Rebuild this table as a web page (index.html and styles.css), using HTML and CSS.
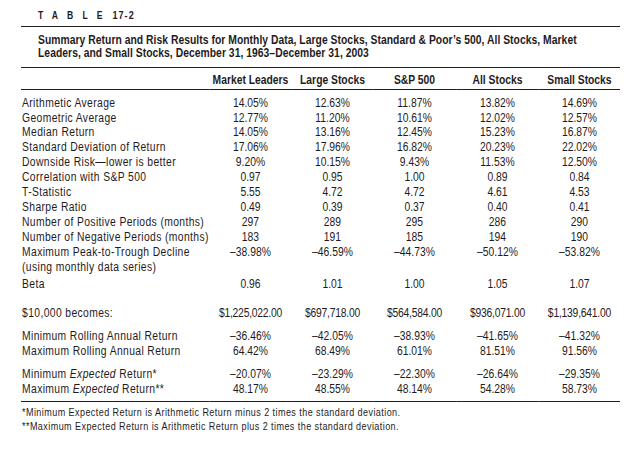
FILE: index.html
```html
<!DOCTYPE html>
<html>
<head>
<meta charset="utf-8">
<link rel="stylesheet" href="styles.css">
</head>
<body>
<div class="frame">
<div class="page">
  <div class="title"><span class="title-word">TABLE</span><span class="title-num">17-2</span></div>
  <div class="caption">Summary Return and Risk Results for Monthly Data, Large Stocks, Standard &amp; Poor’s 500, All Stocks, Market<br>Leaders, and Small Stocks, December 31, 1963–December 31, 2003</div>
  <table class="data">
    <colgroup>
      <col class="c0"><col class="c1"><col class="c2"><col class="c3"><col class="c4"><col class="c5">
    </colgroup>
    <thead>
      <tr><th></th><th>Market Leaders</th><th>Large Stocks</th><th>S&amp;P 500</th><th>All Stocks</th><th>Small Stocks</th></tr>
    </thead>
    <tbody>
      <tr class="first"><td>Arithmetic Average</td><td>14.05%</td><td>12.63%</td><td>11.87%</td><td>13.82%</td><td>14.69%</td></tr>
      <tr><td>Geometric Average</td><td>12.77%</td><td>11.20%</td><td>10.61%</td><td>12.02%</td><td>12.57%</td></tr>
      <tr><td>Median Return</td><td>14.05%</td><td>13.16%</td><td>12.45%</td><td>15.23%</td><td>16.87%</td></tr>
      <tr><td>Standard Deviation of Return</td><td>17.06%</td><td>17.96%</td><td>16.82%</td><td>20.23%</td><td>22.02%</td></tr>
      <tr><td>Downside Risk—lower is better</td><td>9.20%</td><td>10.15%</td><td>9.43%</td><td>11.53%</td><td>12.50%</td></tr>
      <tr><td>Correlation with S&amp;P 500</td><td>0.97</td><td>0.95</td><td>1.00</td><td>0.89</td><td>0.84</td></tr>
      <tr><td>T-Statistic</td><td>5.55</td><td>4.72</td><td>4.72</td><td>4.61</td><td>4.53</td></tr>
      <tr><td>Sharpe Ratio</td><td>0.49</td><td>0.39</td><td>0.37</td><td>0.40</td><td>0.41</td></tr>
      <tr><td>Number of Positive Periods (months)</td><td>297</td><td>289</td><td>295</td><td>286</td><td>290</td></tr>
      <tr><td>Number of Negative Periods (months)</td><td>183</td><td>191</td><td>185</td><td>194</td><td>190</td></tr>
      <tr><td>Maximum Peak-to-Trough Decline</td><td>–38.98%</td><td>–46.59%</td><td>–44.73%</td><td>–50.12%</td><td>–53.82%</td></tr>
      <tr><td>(using monthly data series)</td><td></td><td></td><td></td><td></td><td></td></tr>
      <tr class="beta"><td>Beta</td><td>0.96</td><td>1.01</td><td>1.00</td><td>1.05</td><td>1.07</td></tr>
      <tr class="gap-lg money"><td>$10,000 becomes:</td><td>$1,225,022.00</td><td>$697,718.00</td><td>$564,584.00</td><td>$936,071.00</td><td>$1,139,641.00</td></tr>
      <tr class="gap-sm"><td>Minimum Rolling Annual Return</td><td>–36.46%</td><td>–42.05%</td><td>–38.93%</td><td>–41.65%</td><td>–41.32%</td></tr>
      <tr><td>Maximum Rolling Annual Return</td><td>64.42%</td><td>68.49%</td><td>61.01%</td><td>81.51%</td><td>91.56%</td></tr>
      <tr class="gap-md"><td>Minimum <em>Expected</em> Return*</td><td>–20.07%</td><td>–23.29%</td><td>–22.30%</td><td>–26.64%</td><td>–29.35%</td></tr>
      <tr class="last"><td>Maximum <em>Expected</em> Return**</td><td>48.17%</td><td>48.55%</td><td>48.14%</td><td>54.28%</td><td>58.73%</td></tr>
    </tbody>
  </table>
  <div class="notes">
    <div>*Minimum Expected Return is Arithmetic Return minus 2 times the standard deviation.</div>
    <div>**Maximum Expected Return is Arithmetic Return plus 2 times the standard deviation.</div>
  </div>
</div>
</div>
</body>
</html>
```

FILE: styles.css
```css
html, body {
  margin: 0;
  padding: 0;
  background: #ffffff;
  overflow: hidden;
}
body {
  font-family: "Liberation Sans", Arial, sans-serif;
  color: #1f1b1c;
  font-size: 12px;
}
/* The reference uses a condensed grotesque; the page is laid out
   at natural width and condensed horizontally as a whole. */
.frame {
  margin-left: 21px;
  width: 599px;
  overflow: hidden;
}
.page {
  width: 696.5px;
  transform: scaleX(0.86);
  transform-origin: 0 0;
}
.title {
  font-weight: bold;
  font-size: 10px;
  line-height: 14px;
  padding: 8px 0 3px 19.8px;
  border-bottom: 1.5px solid #231f20;
  white-space: nowrap;
}
.title-word {
  letter-spacing: 10.6px;
}
.title-num {
  font-size: 10.5px;
  letter-spacing: 1.2px;
  margin-left: 1px;
}
.caption {
  font-weight: bold;
  font-size: 12px;
  line-height: 13.7px;
  letter-spacing: 0.05px;
  padding: 6.6px 0 6.2px 19.8px;
  border-bottom: 1.5px solid #231f20;
  white-space: nowrap;
}
.data {
  border-collapse: separate;
  border-spacing: 0;
  table-layout: fixed;
  width: 696.5px;
}
.c0 { width: 218.6px; }
.c1 { width: 96.5px; }
.c2 { width: 94.2px; }
.c3 { width: 96.5px; }
.c4 { width: 96.5px; }
.c5 { width: 94.2px; }
.data th {
  font-weight: bold;
  font-size: 12px;
  line-height: 15px;
  padding: 5.3px 0 0.8px 0;
  text-align: center;
  border-bottom: 1.5px solid #231f20;
  white-space: nowrap;
}
.data td {
  padding: 0;
  line-height: 14.9px;
  text-align: center;
  white-space: nowrap;
}
.data td:first-child {
  text-align: left;
  padding-left: 1.2px;
  letter-spacing: 0.45px;
}
.data tr.money td + td {
  letter-spacing: -0.25px;
}
.data tr.first td { padding-top: 5.4px; }
.data tr.beta td { padding-top: 2.5px; }
.data tr.gap-lg td { padding-top: 14.4px; }
.data tr.gap-sm td { padding-top: 7.8px; }
.data tr.gap-md td { padding-top: 8.4px; }
.data tr.last td {
  padding-bottom: 4.3px;
  border-bottom: 1.5px solid #231f20;
}
.data em { font-style: italic; }
.notes {
  font-size: 10.5px;
  line-height: 13.3px;
  letter-spacing: 0.5px;
  padding-top: 3.9px;
  padding-left: 1.2px;
  white-space: nowrap;
}
```
